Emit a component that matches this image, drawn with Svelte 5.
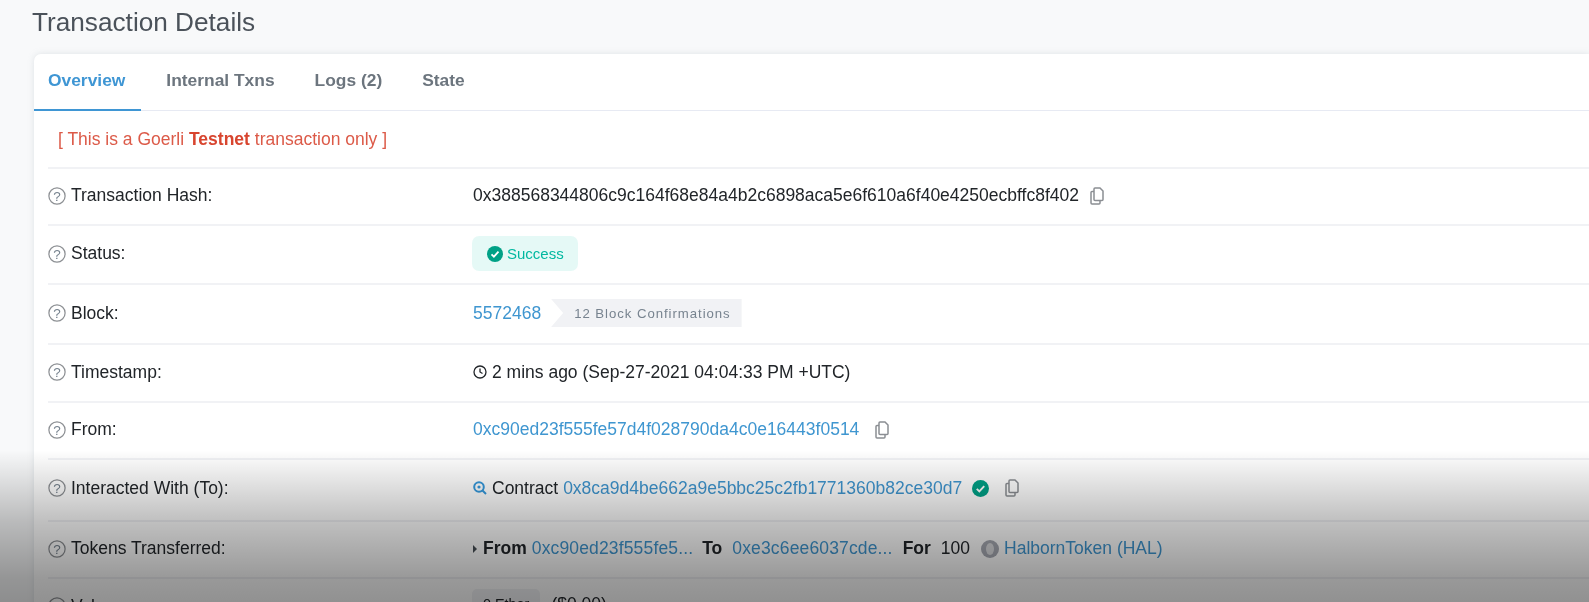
<script>
	const rows = [
		{ key: 'hash', label: 'Transaction Hash:', h: 57 },
		{ key: 'status', label: 'Status:', h: 59 },
		{ key: 'block', label: 'Block:', h: 60 },
		{ key: 'time', label: 'Timestamp:', h: 58 },
		{ key: 'from', label: 'From:', h: 57 },
		{ key: 'to', label: 'Interacted With (To):', h: 62 },
		{ key: 'tokens', label: 'Tokens Transferred:', h: 57 },
		{ key: 'value', label: 'Value:', h: 58 }
	];
</script>

{#snippet copy()}
	<svg class="copy" viewBox="0 0 16 18" width="16" height="18" fill="none" stroke="#8b8e93" stroke-width="1.5">
		<path d="M6 1h5l3 3v8.5a1 1 0 0 1-1 1H6a1 1 0 0 1-1-1V2a1 1 0 0 1 1-1z" />
		<path d="M5 4.500H3a1 1 0 0 0-1 1V16a1 1 0 0 0 1 1h7a1 1 0 0 0 1-1v-2.500" />
	</svg>
{/snippet}

<main class="page">
	<h1>Transaction Details</h1>

	<section class="card">
		<nav class="tabs">
			<span class="tab active">Overview</span>
			<span class="tab">Internal Txns</span>
			<span class="tab">Logs (2)</span>
			<span class="tab">State</span>
		</nav>

		<div class="body">
			<p class="notice">[ This is a Goerli <b>Testnet</b> transaction only ]</p>

			{#each rows as row}
				<div class="row" class:raised={row.key === 'to'} style="height: {row.h}px">
					<div class="label">
						<svg class="help" viewBox="0 0 16 16" width="18" height="18">
							<circle cx="8" cy="8" r="7.200" fill="none" stroke="#8d9094" stroke-width="1.100" />
							<text x="8" y="12" text-anchor="middle">?</text>
						</svg>
						{row.label}
					</div>
					<div class="value">
						{#if row.key === 'hash'}
							<span>0x388568344806c9c164f68e84a4b2c6898aca5e6f610a6f40e4250ecbffc8f402</span>
							{@render copy()}
						{:else if row.key === 'status'}
							<span class="success">
								<svg viewBox="0 0 16 16" width="16" height="16">
									<circle cx="8" cy="8" r="8" fill="#00a186" />
									<path d="M4.500 8.300l2.400 2.400 4.600-5" fill="none" stroke="#fff" stroke-width="1.800" />
								</svg>
								Success
							</span>
						{:else if row.key === 'block'}
							<a href="#block">5572468</a>
							<span class="confirm">12 Block Confirmations</span>
						{:else if row.key === 'time'}
							<svg class="clock" viewBox="0 0 14 14" width="14" height="14" fill="none" stroke="#212529" stroke-width="1.300">
								<circle cx="7" cy="7" r="6" />
								<path d="M7 3.500V7l2.500 1.500" />
							</svg>
							<span class="after-icon">2 mins ago (Sep-27-2021 04:04:33 PM +UTC)</span>
						{:else if row.key === 'from'}
							<a href="#from">0xc90ed23f555fe57d4f028790da4c0e16443f0514</a>
							<span class="gap-copy">{@render copy()}</span>
						{:else if row.key === 'to'}
							<svg class="search" viewBox="0 0 14 14" width="14" height="14" fill="none" stroke="#3498db" stroke-width="2">
								<circle cx="6" cy="6" r="4.800" />
								<circle cx="6" cy="6" r="1.600" fill="#3498db" stroke="none" />
								<path d="M9.500 9.500L13 13" />
							</svg>
							<span class="after-icon">Contract</span>
							<a class="addr" href="#to">0x8ca9d4be662a9e5bbc25c2fb1771360b82ce30d7</a>
							<svg class="verified" viewBox="0 0 16 16" width="17" height="17">
								<circle cx="8" cy="8" r="8" fill="#00a186" />
								<path d="M4.500 8.300l2.400 2.400 4.600-5" fill="none" stroke="#fff" stroke-width="1.800" />
							</svg>
							<span class="gap-copy">{@render copy()}</span>
						{:else if row.key === 'tokens'}
							<span class="caret"></span>
							<b>From</b>
							<a class="short" href="#a">0xc90ed23f555fe5...</a>
							<b class="to">To</b>
							<a class="short second" href="#b">0xe3c6ee6037cde...</a>
							<b class="for">For</b>
							<span class="amount">100</span>
							<span class="coin"><i></i></span>
							<a href="#hal">HalbornToken (HAL)</a>
						{:else}
							<span class="ether">0 Ether</span>
							<span class="usd">($0.00)</span>
						{/if}
					</div>
				</div>
			{/each}
		</div>
	</section>

	<div class="shade"></div>
</main>

<style>
	:global(body) {
		margin: 0;
		background: #f8f9fa;
	}

	/* the source is a video frame, so everything is a little soft */
	.page {
		position: relative;
		height: 602px;
		overflow: hidden;
		padding-left: 34px;
		font-family: 'Liberation Sans', Arial, sans-serif;
		font-size: 17.5px;
		color: #212529;
		background: #f8f9fa;
		filter: blur(0.3px);
	}

	h1 {
		margin: 0;
		height: 54px;
		margin-left: -2px;
		padding-top: 6px;
		box-sizing: border-box;
		font-size: 26.200px;
		line-height: 32px;
		font-weight: 400;
		color: #4b525a;
	}

	.card {
		background: #fff;
		border-radius: 7px 0 0 0;
		box-shadow: 0 0 6px rgba(151, 164, 175, 0.25);
		height: 600px;
	}

	.tabs {
		display: flex;
		height: 57px;
		box-sizing: border-box;
		gap: 10px;
		border-bottom: 1px solid #e7eaf3;
	}

	.tab {
		padding: 0 15px;
		height: 57px;
		box-sizing: border-box;
		line-height: 52px;
		font-size: 17.400px;
		font-weight: 700;
		color: #6c757e;
	}

	.active {
		padding-left: 14px;
		padding-right: 16px;
		color: #3f96d4;
		border-bottom: 2px solid #3f96d4;
	}

	.body {
		padding-left: 14px;
	}

	.notice {
		margin: 0;
		height: 56px;
		padding-left: 10px;
		box-sizing: border-box;
		line-height: 56px;
		color: #dc5a48;
	}

	.notice b {
		color: #d8452f;
	}

	.row {
		display: flex;
		align-items: center;
		box-sizing: border-box;
		border-top: 2px solid #f1f2f5;
		padding-bottom: 2px;
	}

	.raised {
		padding-bottom: 4px;
	}

	.label {
		width: 425px;
		flex: none;
		display: flex;
		align-items: center;
		gap: 5px;
	}

	.help text {
		font-size: 12px;
		fill: #77838f;
	}

	.value {
		display: flex;
		align-items: center;
		white-space: nowrap;
	}

	a {
		color: #3f96d0;
		text-decoration: none;
	}

	.copy {
		margin-left: 10px;
	}

	.gap-copy {
		display: flex;
		margin-left: 5px;
	}

	.success {
		display: inline-flex;
		align-items: center;
		gap: 4px;
		height: 35px;
		margin-left: -1px;
		padding: 0 14px 0 15px;
		border-radius: 7px;
		font-size: 15px;
		color: #00b8a0;
		background: rgba(0, 201, 167, 0.1);
	}

	.confirm {
		display: inline-flex;
		align-items: center;
		height: 28px;
		margin-left: 10px;
		padding: 0 11px 0 23px;
		font-size: 13.200px;
		letter-spacing: 0.95px;
		color: #77838f;
		background: #f1f2f5;
		clip-path: polygon(0 0, 100% 0, 100% 100%, 0 100%, 12px 50%);
	}

	.after-icon {
		margin-left: 5px;
	}

	.addr {
		margin-left: 5px;
	}

	.verified {
		margin-left: 10px;
	}

	.caret {
		width: 0;
		height: 0;
		margin-right: 6px;
		border-left: 4px solid #495057;
		border-top: 4px solid transparent;
		border-bottom: 4px solid transparent;
	}

	.short {
		margin-left: 5px;
		letter-spacing: 0.15px;
	}

	.to {
		margin-left: 9px;
	}

	.second {
		margin-left: 10px;
	}

	.for {
		margin-left: 10px;
	}

	.amount {
		margin-left: 10px;
	}

	.coin {
		display: inline-flex;
		align-items: center;
		justify-content: center;
		width: 18px;
		height: 18px;
		margin: 0 5px 0 11px;
		border-radius: 50%;
		background: #a6a9b2;
	}

	.coin i {
		width: 8px;
		height: 12px;
		border-radius: 50%;
		background: #d9dadd;
	}

	.ether {
		padding: 7px 11px;
		margin: 0 0 4px -1px;
		border-radius: 5px;
		font-size: 14.400px;
		background: #f1f2f5;
	}

	.usd {
		margin: 0 0 4px 11px;
	}

	/* dark fade of the video player controls */
	.shade {
		position: absolute;
		left: 0;
		right: 0;
		bottom: 0;
		height: 152px;
		background: linear-gradient(rgba(0, 0, 0, 0), rgba(0, 0, 0, 0.25) 47%, rgba(0, 0, 0, 0.4) 84%, rgba(0, 0, 0, 0.43));
		pointer-events: none;
	}
</style>
